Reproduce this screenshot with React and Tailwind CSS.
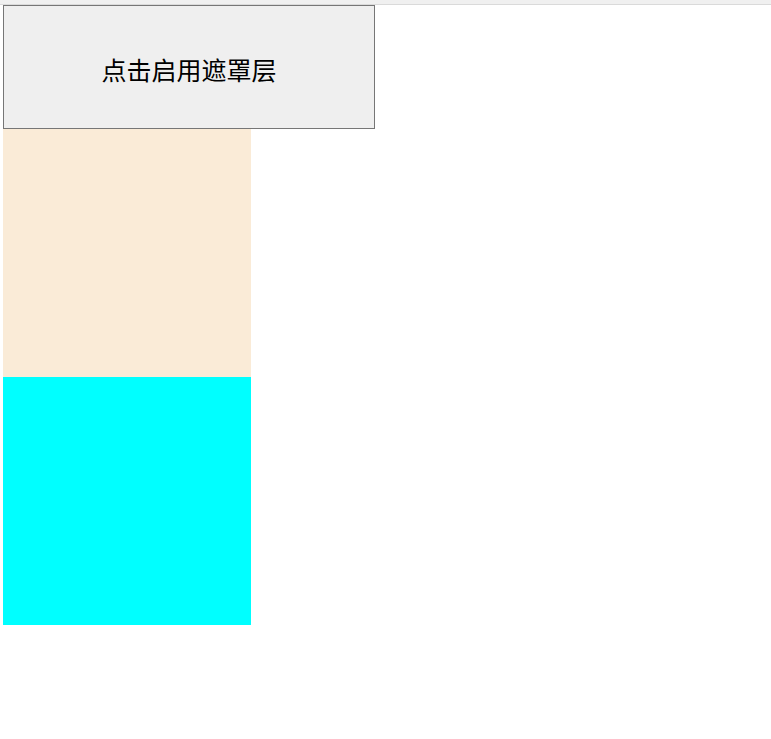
export default function App() {
  return (
    <div className="min-h-[739px] bg-white" style={{ fontFamily: '"Noto Sans CJK SC", "Noto Sans", sans-serif' }}>
      <div className="h-[5px] bg-[#f0f0f0] border-b border-[#dadada]" />
      <div className="pl-[3px] flex flex-col items-start">
        <button className="w-[372px] h-[124px] bg-[#efefef] border border-[#767676] text-[25px] text-black flex items-center justify-center pt-[4px] leading-none">
          点击启用遮罩层
        </button>
        <div className="w-[248px] h-[248px] bg-[#faebd7]" />
        <div className="w-[248px] h-[248px] bg-[#00ffff]" />
      </div>
    </div>
  );
}
